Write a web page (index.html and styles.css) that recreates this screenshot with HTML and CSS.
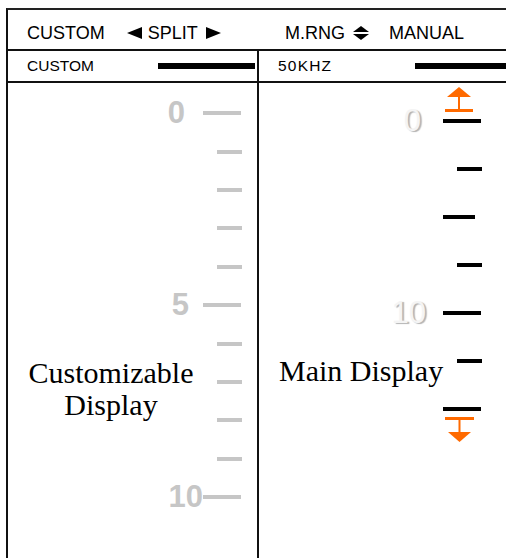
FILE: index.html
```html
<!DOCTYPE html>
<html lang="en">
<head>
    <meta charset="UTF-8">
    <title>Split Display</title>
    <link rel="stylesheet" href="styles.css">
</head>
<body>

<div id="screen">
    <div class="head">
        <div class="head-l">
            <span>CUSTOM</span>
            <svg class="tri tri-l" width="15" height="12" viewBox="0 0 15 12"><polygon points="0,6 15,0 15,12"/></svg>
            <span>SPLIT</span>
            <svg class="tri tri-r" width="15" height="12" viewBox="0 0 15 12"><polygon points="15,6 0,0 0,12"/></svg>
        </div>
        <div class="head-r">
            <span>M.RNG</span>
            <svg class="updown" width="16" height="14" viewBox="0 0 16 14"><polygon points="8,0 0,6 16,6"/><polygon points="0,8 16,8 8,14"/></svg>
            <span>MANUAL</span>
        </div>
    </div>

    <div class="sub">
        <div class="sub-l">
            <span>CUSTOM</span>
            <div class="bar"></div>
        </div>
        <div class="sub-r">
            <span class="freq">50KHZ</span>
            <div class="bar bar-r"></div>
        </div>
    </div>

    <div class="main">
        <div class="pane pane-l">
            <span class="lab" style="grid-row: 1">0</span>
            <div class="tick long" style="grid-row: 1"></div>
            <div class="tick" style="grid-row: 2"></div>
            <div class="tick" style="grid-row: 3"></div>
            <div class="tick" style="grid-row: 4"></div>
            <div class="tick" style="grid-row: 5"></div>
            <span class="lab five" style="grid-row: 6">5</span>
            <div class="tick long" style="grid-row: 6"></div>
            <div class="tick" style="grid-row: 7"></div>
            <div class="tick" style="grid-row: 8"></div>
            <div class="tick" style="grid-row: 9"></div>
            <div class="tick" style="grid-row: 10"></div>
            <span class="lab ten" style="grid-row: 11">10</span>
            <div class="tick long" style="grid-row: 11"></div>
            <div class="caption">Customizable<br>Display</div>
        </div>

        <div class="pane pane-r">
            <span class="ghost" style="grid-row: 1">0</span>
            <div class="mark long" style="grid-row: 1"></div>
            <div class="mark" style="grid-row: 2"></div>
            <div class="mark mid" style="grid-row: 3"></div>
            <div class="mark" style="grid-row: 4"></div>
            <span class="ghost ghost-10" style="grid-row: 5">10</span>
            <div class="mark long" style="grid-row: 5"></div>
            <div class="mark" style="grid-row: 6"></div>
            <div class="mark long" style="grid-row: 7"></div>
            <div class="main-caption">Main Display</div>

            <!-- range limit arrows -->
            <svg class="arrow arrow-up" width="30" height="28" viewBox="0 0 30 28">
                <polygon points="15,2 3,12 27,12"/>
                <rect x="14" y="12" width="2" height="12"/>
                <rect x="1" y="24" width="28" height="3"/>
            </svg>
            <svg class="arrow arrow-down" width="31" height="28" viewBox="0 0 31 28">
                <rect x="1" y="1" width="29" height="3"/>
                <rect x="14.5" y="4" width="2" height="12"/>
                <polygon points="4,16 27,16 15.5,26"/>
            </svg>
        </div>
    </div>
</div>

</body>
</html>
```

FILE: styles.css
```css
body {
    margin: 8px 0 0 6px;
    background: #fff;
    overflow: hidden;
    font-family: "Liberation Sans", Arial, sans-serif;
    color: #000;
}

#screen {
    width: 520px;
    border-left: 2px solid #111;
    border-top: 2px solid #222;
}

.head {
    display: flex;
    align-items: center;
    height: 32px;
    padding-top: 7px;
    border-bottom: 2px solid #111;
    font-size: 18px;
}

.head-l {
    width: 232px;
    padding-left: 19px;
    display: flex;
    align-items: center;
}

.head-l .tri-l {
    margin: 0 6px 0 22px;
}

.head-l .tri-r {
    margin-left: 8px;
}

.head-r {
    padding-left: 26px;
    display: flex;
    align-items: center;
}

.head-r .updown {
    margin: 0 20px 0 8px;
}

.sub {
    display: flex;
    height: 30px;
    border-bottom: 2px solid #111;
    font-size: 15.5px;
}

.sub-l {
    width: 230px;
    padding-left: 19px;
    border-right: 2px solid #111;
    display: flex;
    align-items: center;
}

.sub-r {
    flex: 1;
    padding-left: 19px;
    display: flex;
    align-items: center;
}

.freq {
    letter-spacing: 1.2px;
}

.bar {
    margin-left: auto;
    margin-right: 2px;
    width: 97px;
    height: 6px;
    background: #000;
}

.bar-r {
    width: 111px;
}

.main {
    display: flex;
    height: 480px;
}

.pane {
    display: grid;
    grid-template-columns: minmax(0, 1fr) 39px;
    align-content: start;
}

.pane-l {
    width: 234px;
    padding: 11px 15px 0 0;
    border-right: 2px solid #111;
    grid-template-rows: repeat(11, 38.4px);
}

.pane-r {
    flex: 1;
    position: relative;
    padding: 14px 46px 0 0;
    grid-template-rows: repeat(7, 48px);
}

.lab {
    grid-column: 1;
    justify-self: end;
    align-self: center;
    padding-right: 18px;
    font-size: 31px;
    font-weight: bold;
    line-height: 32px;
    color: #c6c6c6;
}

.lab.five {
    padding-right: 14px;
}

.lab.ten {
    padding-right: 0;
}

.tick {
    grid-column: 2;
    justify-self: end;
    align-self: center;
    width: 25px;
    height: 4px;
    background: #c6c6c6;
}

.tick.long {
    width: 38px;
    margin-right: 1px;
}

.caption {
    grid-column: 1;
    grid-row: 8 / span 2;
    align-self: start;
    margin-top: -6px;
    padding-left: 11px;
    text-align: center;
    font-family: "Liberation Serif", "Times New Roman", serif;
    font-size: 30px;
    line-height: 32px;
    white-space: nowrap;
}

.ghost {
    grid-column: 1;
    justify-self: end;
    align-self: center;
    padding-right: 22px;
    font-size: 31px;
    line-height: 32px;
    color: #f4f4f4;
    text-shadow: 2px 1px 1px #b4b4b4;
}

.ghost-10 {
    padding-right: 17px;
}

.mark {
    grid-column: 2;
    justify-self: end;
    align-self: center;
    width: 25px;
    height: 4px;
    background: #000;
}

.mark.long {
    justify-self: start;
    width: 38px;
}

.mark.mid {
    justify-self: start;
    width: 32px;
}

.main-caption {
    grid-column: 1;
    grid-row: 6;
    align-self: start;
    margin-top: 18px;
    padding-left: 20px;
    font-family: "Liberation Serif", "Times New Roman", serif;
    font-size: 30px;
    line-height: 32px;
    white-space: nowrap;
}

.arrow {
    position: absolute;
    left: 185px;
    fill: #ff6a00;
}

.arrow-up {
    top: 2px;
}

.arrow-down {
    top: 333px;
}
```
